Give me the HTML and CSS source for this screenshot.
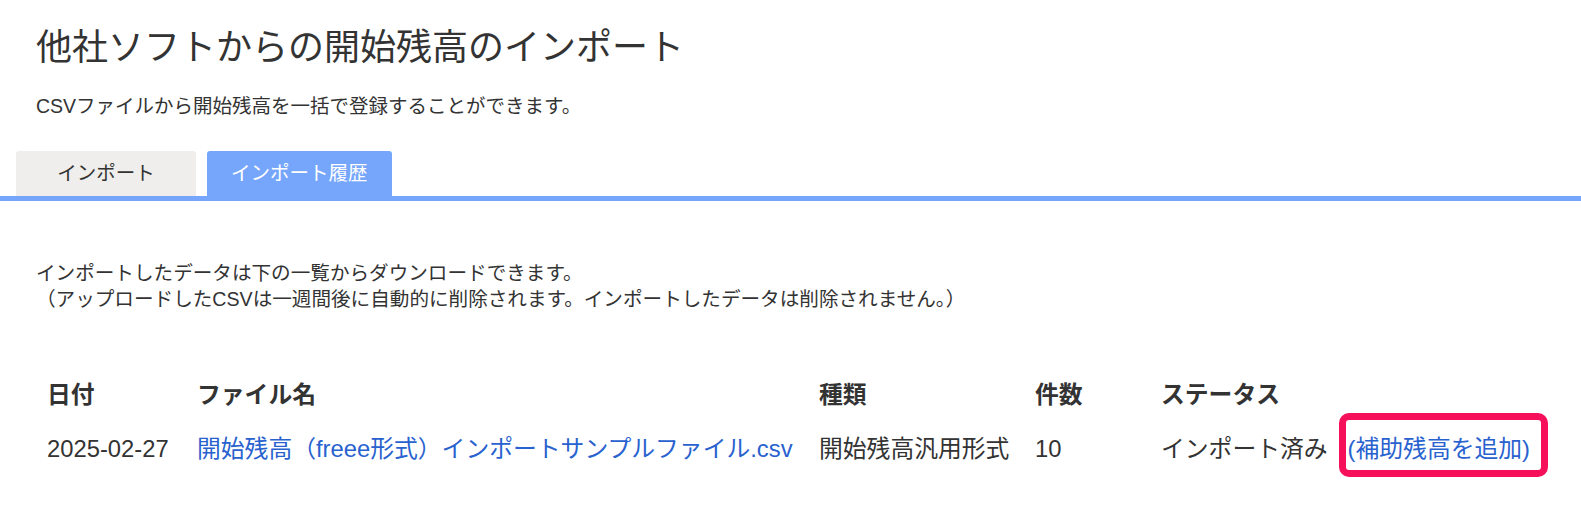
FILE: index.html
```html
<!DOCTYPE html>
<html lang="ja">
<head>
<meta charset="utf-8">
<title>他社ソフトからの開始残高のインポート</title>
<link rel="stylesheet" href="styles.css">
</head>
<body>
  <header class="page-head">
    <h1 class="title">他社ソフトからの開始残高のインポート</h1>
    <p class="lead">CSVファイルから開始残高を一括で登録することができます。</p>
  </header>

  <nav class="tabs">
    <a class="tab">インポート</a>
    <a class="tab tab-active">インポート履歴</a>
  </nav>

  <section class="history">
    <p class="note">インポートしたデータは下の一覧からダウンロードできます。<br>（アップロードしたCSVは一週間後に自動的に削除されます。インポートしたデータは削除されません。）</p>

    <table class="list">
      <colgroup>
        <col class="c-date">
        <col class="c-file">
        <col class="c-kind">
        <col class="c-count">
        <col class="c-status">
      </colgroup>
      <thead>
        <tr>
          <th>日付</th>
          <th>ファイル名</th>
          <th>種類</th>
          <th>件数</th>
          <th>ステータス</th>
        </tr>
      </thead>
      <tbody>
        <tr>
          <td>2025-02-27</td>
          <td><a class="link">開始残高（freee形式）インポートサンプルファイル.csv</a></td>
          <td>開始残高汎用形式</td>
          <td>10</td>
          <td>インポート済み<span class="annot"><a class="link">(補助残高を追加)</a></span></td>
        </tr>
      </tbody>
    </table>
  </section>
</body>
</html>
```

FILE: styles.css
```css
html, body {
  margin: 0;
  padding: 0;
  background: #ffffff;
}

body {
  font-family: "Liberation Sans", "Noto Sans CJK JP", sans-serif;
  color: #333333;
  font-size: 19.5px;
  line-height: 26px;
  min-height: 525px;
}

.page-head {
  padding: 26px 0 0 36px;
}

.title {
  margin: 0;
  font-size: 36px;
  line-height: 44px;
  font-weight: normal;
  color: #333333;
}

.lead {
  margin: 23px 0 0 0;
  font-size: 19.5px;
  line-height: 26px;
}

.tabs {
  display: flex;
  gap: 11px;
  margin-top: 32px;
  padding-left: 16px;
  border-bottom: 5px solid #76a6fb;
}

.tab {
  display: block;
  box-sizing: border-box;
  min-width: 180px;
  height: 45px;
  padding: 0 24px;
  line-height: 45px;
  text-align: center;
  font-size: 19.5px;
  background: #efeeec;
  color: #333333;
  border-radius: 3px 3px 0 0;
}

.tab-active {
  background: #76a6fb;
  color: #ffffff;
}

.history {
  padding-top: 59px;
  padding-bottom: 40px;
}

.note {
  margin: 0 0 0 36px;
  font-size: 19.6px;
  line-height: 26px;
}

.list {
  margin: 57px 0 0 34px;
  border-collapse: collapse;
  table-layout: fixed;
  width: 1534px;
}

.c-date { width: 150px; }
.c-file { width: 622px; }
.c-kind { width: 216px; }
.c-count { width: 126px; }
.c-status { width: 420px; }

.list th,
.list td {
  padding: 11px 13px;
  height: 30px;
  text-align: left;
  vertical-align: middle;
  white-space: nowrap;
  font-size: 23.8px;
  line-height: 30px;
}

.list td {
  padding-top: 13px;
  padding-bottom: 9px;
}

.list th {
  font-weight: bold;
  color: #333333;
}

.link {
  color: #2962cf;
  text-decoration: none;
}

.annot {
  position: relative;
  display: inline-block;
  vertical-align: top;
  line-height: 30px;
  margin-left: 20px;
}

.annot::before {
  content: "";
  position: absolute;
  top: -21px;
  bottom: -13px;
  left: -9px;
  right: -18px;
  border: 7px solid #f6105b;
  border-radius: 10px;
  pointer-events: none;
}
```
